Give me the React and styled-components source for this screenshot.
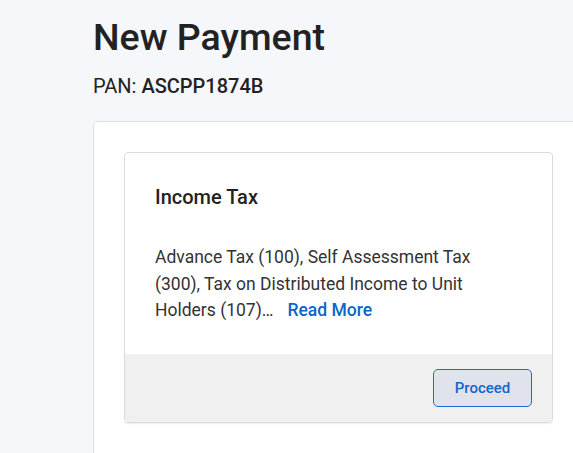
import React from "react";
import styled, { createGlobalStyle } from "styled-components";

const Global = createGlobalStyle`
  html, body { margin: 0; padding: 0; }
  body {
    background: #f6f7fb;
    font-family: Roboto, "Noto Sans", Arial, sans-serif;
    color: #222;
    overflow: hidden;
  }
`;

const Page = styled.main`
  padding: 13px 0 0 93px;
  height: 453px;
  box-sizing: border-box;
  overflow: hidden;
`;

const Title = styled.h1`
  margin: 0;
  font-size: 37.5px;
  font-weight: 500;
  line-height: 48px;
  color: #222;
`;

const Pan = styled.div`
  margin-top: 12px;
  font-size: 20px;
  line-height: 26px;
  color: #222;
  b { font-weight: 500; }
`;

const Panel = styled.section`
  margin-top: 22px;
  background: #fff;
  border: 1px solid #dcdfe9;
  border-radius: 5px;
  padding: 30px;
  width: 600px;
  height: 400px;
`;

const Card = styled.article`
  width: 427px;
  border: 1px solid #d7dbe7;
  border-radius: 4px;
  overflow: hidden;
  box-shadow: 0 1px 1px rgba(40, 50, 90, 0.08);
`;

const Body = styled.div`
  padding: 30px 30px 30px 30px;
`;

const CardTitle = styled.h2`
  margin: 0;
  font-size: 20px;
  font-weight: 500;
  line-height: 28px;
  color: #222;
`;

const Desc = styled.p`
  margin: 33px 0 0;
  font-size: 17.5px;
  line-height: 26.5px;
  color: #333;
  width: 350px;
`;

const ReadMore = styled.a`
  color: #0b66c9;
  font-weight: 500;
  margin-left: 14px;
  text-decoration: none;
  cursor: pointer;
`;

const Footer = styled.div`
  background: #f0f0f0;
  padding: 15px 20px;
  display: flex;
  justify-content: flex-end;
`;

const Button = styled.button`
  width: 99px;
  height: 38px;
  background: #e1e3ec;
  border: 1px solid #1a6fd0;
  border-radius: 5px;
  color: #1466c8;
  font-family: inherit;
  font-size: 15px;
  font-weight: 500;
  cursor: pointer;
`;

export default function App() {
  return (
    <>
      <Global />
      <Page>
        <Title>New Payment</Title>
        <Pan>
          PAN: <b>ASCPP1874B</b>
        </Pan>
        <Panel>
          <Card>
            <Body>
              <CardTitle>Income Tax</CardTitle>
              <Desc>
                Advance Tax (100), Self Assessment Tax (300), Tax on Distributed
                Income to Unit Holders (107)…
                <ReadMore>Read More</ReadMore>
              </Desc>
            </Body>
            <Footer>
              <Button>Proceed</Button>
            </Footer>
          </Card>
        </Panel>
      </Page>
    </>
  );
}
